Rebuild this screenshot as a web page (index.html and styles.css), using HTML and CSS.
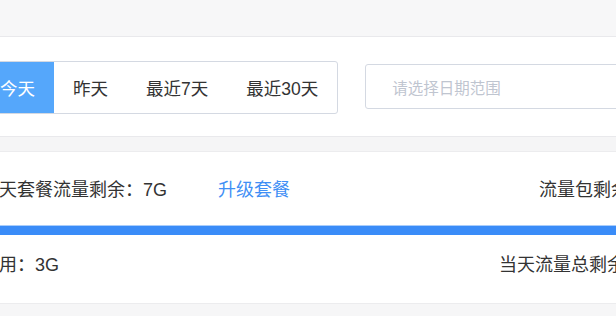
FILE: index.html
```html
<!DOCTYPE html>
<html lang="zh">
<head>
<meta charset="utf-8">
<link rel="stylesheet" href="styles.css">
</head>
<body>
<div class="topbar"></div>
<section class="filter">
  <div class="seg">
    <span class="seg-btn active">今天</span>
    <span class="seg-btn">昨天</span>
    <span class="seg-btn">最近7天</span>
    <span class="seg-btn">最近30天</span>
  </div>
  <div class="date-input">请选择日期范围</div>
</section>
<div class="gap"></div>
<section class="stats">
  <div class="row">
    <div class="left">
      <span>当天套餐流量剩余：7G</span>
      <a class="link">升级套餐</a>
    </div>
    <span class="right">流量包剩余：3G</span>
  </div>
  <div class="bar"></div>
  <div class="row row2">
    <span>已用：3G</span>
    <span class="right">当天流量总剩余：10G</span>
  </div>
</section>
</body>
</html>
```
FILE: styles.css
```css
html, body {
  margin: 0;
  padding: 0;
  overflow: hidden;
  background: #f6f6f7;
  font-family: "Liberation Sans", "Noto Sans CJK SC", sans-serif;
  color: #333;
}
.topbar {
  height: 36px;
  background: #f7f7f8;
  border-bottom: 1px solid #e9e9ec;
}
.filter {
  background: #fff;
  height: 100px;
  box-sizing: border-box;
  padding-top: 24px;
  display: flex;
  align-items: flex-start;
  margin-left: -20px;
  border-bottom: 1px solid #e9e9ec;
}
.seg {
  display: flex;
  flex-shrink: 0;
  height: 53px;
  box-sizing: border-box;
  border: 1px solid #d4d9e2;
  border-radius: 3px;
  overflow: hidden;
}
.seg-btn {
  display: flex;
  align-items: center;
  padding: 0 19px;
  font-size: 17.5px;
  white-space: nowrap;
  color: #333;
}
.seg-btn.active {
  background: #55a7fb;
  color: #fff;
}
.date-input {
  margin-left: 27px;
  margin-top: 3px;
  height: 45px;
  width: 400px;
  box-sizing: border-box;
  border: 1px solid #d4d9e2;
  border-radius: 3px;
  padding-left: 26px;
  display: flex;
  align-items: center;
  font-size: 15.5px;
  white-space: nowrap;
  color: #bfc5d0;
  flex-shrink: 0;
}
.gap {
  height: 14px;
  background: #f5f5f6;
  border-bottom: 1px solid #ececee;
}
.stats {
  background: #fff;
  border-bottom: 1px solid #ececee;
  padding: 26px 0 26px;
}
.row {
  display: flex;
  justify-content: space-between;
  align-items: center;
  width: 690px;
  margin-left: -19px;
  height: 24px;
  font-size: 18px;
  line-height: 24px;
  white-space: nowrap;
}
.row2 {
  width: 696px;
  margin-top: 1px;
}
.left {
  display: flex;
  gap: 51px;
}
.link {
  color: #3f8ff5;
}
.bar {
  height: 10px;
  margin: 23px 0 18px;
  background: #3a8cf8;
  border-top: 1px solid #a9cdfb;
  box-sizing: border-box;
}
```
